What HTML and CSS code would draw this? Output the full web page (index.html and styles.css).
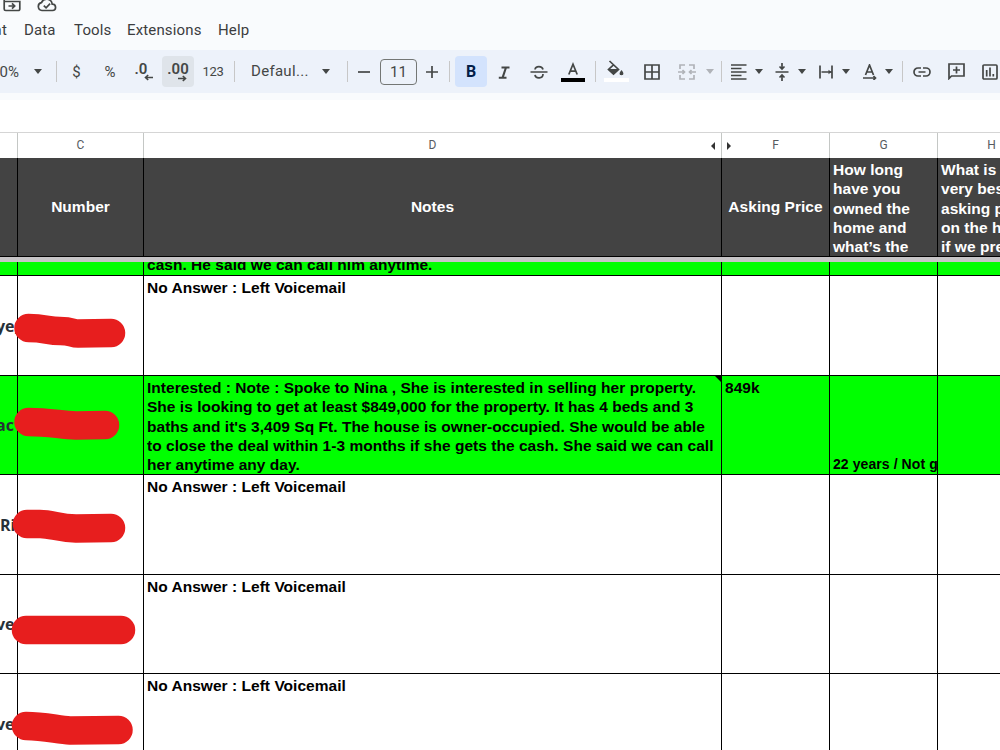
FILE: index.html
```
<!DOCTYPE html>
<html lang="en">

<head>
    <meta charset="UTF-8">
    <meta name="viewport" content="width=device-width, initial-scale=1.0">
    <title>Leads</title>
    <link rel="stylesheet" href="styles.css">
</head>

<body>
    <header class="top">
        <div class="doc-icons">
            <svg width="18" height="16" viewBox="0 0 18 16" class="line"><path d="M1.2 1v11a1.5 1.5 0 0 0 1.5 1.5h12.6a1.5 1.5 0 0 0 1.5-1.5V4.5H1.2M5.5 9h6M9 6.3 11.7 9 9 11.7"/></svg>
            <svg width="20" height="16" viewBox="0 0 20 16" class="line"><path d="M5 13.5a4 4 0 0 1-.5-7.9 5.6 5.6 0 0 1 10.7 1.5 3.2 3.2 0 0 1 .3 6.4zM6.8 8.6l2.3 2.3 4-4.2"/></svg>
        </div>
        <nav class="menu">
            <span class="menu-format">Format</span>
            <span class="menu-data">Data</span>
            <span class="menu-tools">Tools</span>
            <span class="menu-ext">Extensions</span>
            <span>Help</span>
        </nav>
    </header>

    <div class="toolbar">
        <div class="tool zoom">100%</div>
        <div class="tool"><i class="caret"></i></div>
        <div class="tool"><i class="sep"></i></div>
        <div class="tool">$</div>
        <div class="tool">%</div>
        <div class="tool decimal">.0
            <svg class="arrow" width="9" height="7" viewBox="0 0 9 7"><path d="M9 3.5H2M4.2 1 1.5 3.5 4.2 6"/></svg>
        </div>
        <div class="tool"><div class="btn hover decimal">.00
            <svg class="arrow" width="9" height="7" viewBox="0 0 9 7"><path d="M0 3.5h7M4.8 1l2.7 2.5L4.8 6"/></svg>
        </div></div>
        <div class="tool small">123</div>
        <div class="tool"><i class="sep"></i></div>
        <div class="tool font-name">Defaul...</div>
        <div class="tool"><i class="caret"></i></div>
        <div class="tool"><i class="sep"></i></div>
        <div class="tool"><svg width="12" height="12" viewBox="0 0 12 12" class="line"><path d="M0 6h12"/></svg></div>
        <div class="tool"><div class="font-size">11</div></div>
        <div class="tool"><svg width="12" height="12" viewBox="0 0 12 12" class="line"><path d="M0 6h12M6 0v12"/></svg></div>
        <div class="tool"><i class="sep"></i></div>
        <div class="tool"><div class="btn active">B</div></div>
        <div class="tool"><svg width="20" height="20" viewBox="0 0 20 20" class="line thick"><path d="M7.5 5.5H15.5M4.8 15.7h7.7M12 5.5 8.6 15.7"/></svg></div>
        <div class="tool"><svg width="20" height="20" viewBox="0 0 20 20" class="line"><path d="M1.5 10h17M6 7.5C6.5 3.7 13.2 3.7 14 7.5M6 12.8c.6 4.2 8 4.2 8-.8"/></svg></div>
        <div class="tool"><svg width="24" height="22" viewBox="0 0 24 22" class="line"><path d="M7.8 13.5 12 3.3 16.2 13.5M9.2 10.2h5.6"/><path class="bar-black" d="M0 17h24v4H0z"/></svg></div>
        <div class="tool"><i class="sep"></i></div>
        <div class="tool"><svg width="26" height="24" viewBox="0 0 26 24" class="line"><path d="M6.5 1 15.5 9.5 10.5 14 5.5 9.5 10.5 4.8"/><path class="fill" d="M5 9h11l-5.5 5.8zM18.5 10c3 3.6 2 5.2 0 5.2s-3-1.6 0-5.2z"/><path class="bar-white" d="M1 18h25v4H1z"/></svg></div>
        <div class="tool"><svg width="16" height="16" viewBox="0 0 16 16" class="line"><path d="M1 1h14v14H1zM8 1v14M1 8h14"/></svg></div>
        <div class="tool"><svg width="18" height="16" viewBox="0 0 18 16" class="line off"><path d="M7 1H2v4M7 15H2v-4M11 1h5v4M11 15h5v-4M0 8h6M4.5 6 6.500 8l-2 2M18 8h-6M13.500 6 11.500 8l2 2"/></svg></div>
        <div class="tool"><i class="caret off"></i></div>
        <div class="tool"><i class="sep"></i></div>
        <div class="tool"><svg width="16" height="16" viewBox="0 0 16 16" class="line"><path d="M0 1h15.5M0 4.5h10.5M0 8h15.5M0 11.5h10.5M0 15h15.5"/></svg></div>
        <div class="tool"><i class="caret"></i></div>
        <div class="tool"><svg width="14" height="18" viewBox="0 0 14 18" class="line"><path d="M.5 9h13M7 0v5.5M4.5 3.5 7 6l2.5-2.5M7 18v-5.5M4.5 14.5 7 12l2.5 2.5"/></svg></div>
        <div class="tool"><i class="caret"></i></div>
        <div class="tool wrap"><svg width="14" height="14" viewBox="0 0 14 14" class="line"><path d="M1 .5v13M13 .5v13M2.500 7h10"/><path class="fill" d="M9.500 4.800 12.500 7l-3 2.200z"/></svg></div>
        <div class="tool"><i class="caret"></i></div>
        <div class="tool rotate"><svg width="16" height="16" viewBox="0 0 16 16" class="line"><path d="M3.5 11 7.5 1 11.5 11M4.8 8h5.4M1 14h12.5M11.5 12l2 2-2 2"/></svg></div>
        <div class="tool"><i class="caret"></i></div>
        <div class="tool"><i class="sep"></i></div>
        <div class="tool"><svg width="18" height="10" viewBox="0 0 18 10" class="line"><path d="M8 1H5a4 4 0 0 0 0 8h3M10 1h3a4 4 0 0 1 0 8h-3M5.5 5h7"/></svg></div>
        <div class="tool"><svg width="17" height="17" viewBox="0 0 17 17" class="line"><path d="M1 15.5V1h15v12H3.5zM8.5 3.5v7M5 7h7"/></svg></div>
        <div class="tool"><svg width="16" height="16" viewBox="0 0 16 16" class="line"><rect x="1" y="1" width="14" height="14" rx="1"/><path d="M4.7 6v6.5M8 3.5v9M11.3 10v2.5"/></svg></div>
    </div>

    <main class="sheet">
        <div class="row letters">
            <div class="cell"></div>
            <div class="cell">C</div>
            <div class="cell">D<i class="hidden-left"></i></div>
            <div class="cell"><i class="hidden-right"></i>F</div>
            <div class="cell">G</div>
            <div class="cell">H</div>
        </div>
        <div class="row head">
            <div class="cell"></div>
            <div class="cell center">Number</div>
            <div class="cell center">Notes</div>
            <div class="cell center">Asking Price</div>
            <div class="cell">How long<br>have you<br>owned the<br>home and<br>what’s the</div>
            <div class="cell">What is the<br>very best<br>asking price<br>on the home<br>if we pre</div>
        </div>
        <div class="freeze"></div>
        <div class="row green partial">
            <div class="cell"></div>
            <div class="cell"></div>
            <div class="cell bottom">cash. He said we can call him anytime.</div>
            <div class="cell"></div>
            <div class="cell"></div>
            <div class="cell"></div>
        </div>
        <div class="row tall">
            <div class="cell name">ye,</div>
            <div class="cell number"><svg class="scribble" width="144" height="99"><path d="M28.5 52C45 52 48 55 60 55S72 57.5 78 57.5 111 57 111 57"/></svg></div>
            <div class="cell">No Answer : Left Voicemail</div>
            <div class="cell"></div>
            <div class="cell"></div>
            <div class="cell"></div>
        </div>
        <div class="row green">
            <div class="cell name">ac</div>
            <div class="cell number"><svg class="scribble" width="144" height="99"><path d="M28.5 46C50 46 60 49 76 49.5L105 49"/></svg></div>
            <div class="cell noted">Interested : Note : Spoke to Nina , She is interested in selling her property.<br>She is looking to get at least $849,000 for the property. It has 4 beds and 3<br>baths and it's 3,409 Sq Ft. The house is owner-occupied. She would be able<br>to close the deal within 1-3 months if she gets the cash. She said we can call<br>her anytime any day.</div>
            <div class="cell">849k</div>
            <div class="cell bottom years">22 years / Not going</div>
            <div class="cell"></div>
        </div>
        <div class="row tall">
            <div class="cell name ri">Ri</div>
            <div class="cell number"><svg class="scribble" width="144" height="99"><path d="M27 49H40C52 49 58 53 76 53.5L111 53"/></svg></div>
            <div class="cell">No Answer : Left Voicemail</div>
            <div class="cell"></div>
            <div class="cell"></div>
            <div class="cell"></div>
        </div>
        <div class="row">
            <div class="cell name">ve</div>
            <div class="cell number"><svg class="scribble" width="144" height="98"><path d="M26 55H121"/></svg></div>
            <div class="cell">No Answer : Left Voicemail</div>
            <div class="cell"></div>
            <div class="cell"></div>
            <div class="cell"></div>
        </div>
        <div class="row tall">
            <div class="cell name">ve</div>
            <div class="cell number"><svg class="scribble" width="144" height="99"><path d="M26 52C45 52 58 56 70 56.5L118.5 56"/></svg></div>
            <div class="cell">No Answer : Left Voicemail</div>
            <div class="cell"></div>
            <div class="cell"></div>
            <div class="cell"></div>
        </div>
    </main>
</body>

</html>
```
FILE: styles.css
```
* {
    box-sizing: border-box;
}

body {
    margin: 0;
    width: 1000px;
    height: 750px;
    overflow: hidden;
    background-color: #fff;
    font-family: Roboto, Arial, sans-serif;
    color: #444746;
}

.top {
    height: 50px;
    background-color: #f9fbfd;
    overflow: hidden;
}

.doc-icons {
    display: flex;
    gap: 16px;
    height: 16px;
    margin-top: -3px;
    padding-left: 3px;
}

.menu {
    display: flex;
    justify-content: flex-start;
    margin-top: 7px;
    font-size: 15px;
    line-height: 20px;
    letter-spacing: 0.15px;
    color: #3c3d3f;
}

.menu span {
    flex: none;
}

.menu-format {
    display: flex;
    justify-content: flex-end;
    width: 7px;
    margin-right: 17px;
}

.menu-data {
    width: 50px;
}

.menu-tools {
    width: 53px;
}

.menu-ext {
    width: 91px;
}

svg {
    display: block;
    flex: none;
}

.line {
    fill: none;
    stroke: #444746;
    stroke-width: 1.7;
}

.line.thick {
    stroke-width: 2.1;
}

.line.off {
    stroke: #b0b3b8;
}

.line .fill {
    fill: #444746;
    stroke: none;
}

.line .bar-black {
    fill: #000;
    stroke: none;
}

.line .bar-white {
    fill: #fff;
    stroke: none;
}

/* toolbar */
.toolbar {
    display: grid;
    grid-template-columns:
        28px 20px 17px 23px 44px 24px 44px 26px 16px 67px 34px 8px 26px 43px 24px 11px
        32px 34px 35px 34px 10px 31px 42px 27px 20px 3px 32px 8px 38px 2px 37px 11px
        32px 12px 14px 26px 43px 23px;
    height: 43px;
    background-color: #edf2fa;
    font-size: 15px;
    box-shadow: 0 7px 0 #f9fbfd;
}

.tool {
    display: flex;
    justify-content: center;
    align-items: center;
    min-width: 0;
}

.zoom {
    justify-content: flex-end;
    padding-right: 9px;
}

.font-name {
    justify-content: flex-start;
    padding: 0 0 1px 9px;
    letter-spacing: 0.3px;
}

.small {
    font-size: 13px;
    letter-spacing: -0.3px;
}

.wrap {
    padding-left: 9px;
}

.rotate {
    padding-left: 6px;
}

.decimal {
    position: relative;
    font-size: 15px;
    font-weight: 600;
    padding: 0 6px 5px 0;
}

.arrow {
    position: absolute;
    right: 3px;
    bottom: 12px;
    fill: none;
    stroke: #444746;
    stroke-width: 1.6;
}

.btn {
    flex: none;
    display: flex;
    justify-content: center;
    align-items: center;
    width: 32px;
    height: 31px;
    border-radius: 4px;
}

.btn.hover {
    background-color: #dfe4ea;
    padding: 0 0 6px;
}

.btn.hover .arrow {
    right: 7px;
    bottom: 5px;
}

.btn.active {
    background-color: #d3e3fd;
    color: #041e49;
    font-size: 16px;
    font-weight: bold;
}

.font-size {
    flex: none;
    width: 37px;
    height: 26px;
    border: 1px solid #747775;
    border-radius: 4px;
    text-align: center;
    line-height: 25px;
}

.caret {
    flex: none;
    border: 4.5px solid transparent;
    border-top: 5px solid #444746;
    border-bottom: 0;
}

.caret.off {
    border-top-color: #b0b3b8;
}

.sep {
    flex: none;
    width: 1px;
    height: 21px;
    background-color: #c7c7c7;
}

/* sheet */
.sheet {
    margin-top: 39px;
    border-top: 1px solid #d5d5d5;
    font-family: "Liberation Sans", Arial, sans-serif;
    font-size: 15.5px;
    font-weight: bold;
    line-height: 19.3px;
    letter-spacing: 0.03px;
    color: #000;
}

.row {
    display: grid;
    grid-template-columns: 18px 126px 578px 108px 108px 108px;
    height: 99px;
}

.row.tall {
    height: 100px;
}

.cell {
    min-width: 0;
    padding: 2px 0 0 3px;
    border-right: 1px solid #000;
    border-bottom: 1px solid #000;
    white-space: nowrap;
    overflow: hidden;
}

.row.letters {
    height: 25px;
    font-family: Roboto, Arial, sans-serif;
    font-size: 12px;
    font-weight: normal;
    letter-spacing: 0;
    color: #575b5f;
}

.letters .cell {
    position: relative;
    padding: 0;
    border-right-color: #c4c7c5;
    border-bottom: 0;
    text-align: center;
    line-height: 25px;
}

.hidden-left,
.hidden-right {
    position: absolute;
    top: 9px;
    border: 4px solid transparent;
}

.hidden-left {
    right: 6px;
    border-left: 0;
    border-right-color: #333;
}

.hidden-right {
    left: 5px;
    border-right: 0;
    border-left-color: #333;
}

.row.head {
    height: 99px;
    background-color: #434343;
    color: #fff;
}

.cell.center {
    display: flex;
    justify-content: center;
    align-items: center;
    padding: 0 0 1px;
}

.freeze {
    height: 5px;
    background-color: #c6c4c6;
}

.row.green {
    background-color: #00ff00;
}

.row.partial {
    height: 14px;
}

.cell.bottom {
    display: flex;
    align-items: flex-end;
}

.partial .cell.bottom {
    padding-bottom: 1px;
}

.cell.years {
    font-size: 14px;
    letter-spacing: 0.08px;
}

.noted {
    position: relative;
}

/* corner marker of a cell with a note */
.noted::after {
    content: "";
    position: absolute;
    top: 0;
    right: 0;
    border-top: 6px solid #000;
    border-left: 6px solid transparent;
}

.cell.name {
    display: flex;
    align-items: center;
    padding: 2px 0 0;
    text-indent: -4px;
    font-family: "Open Sans", sans-serif;
    font-size: 16px;
    font-weight: 700;
    letter-spacing: 0;
    color: #273038;
}

.cell.ri {
    text-indent: 0;
}

.cell.number {
    position: relative;
    overflow: visible;
}

.scribble {
    position: absolute;
    top: 0;
    left: -18px;
    fill: none;
    stroke: #e71e1e;
    stroke-width: 28.5;
    stroke-linecap: round;
    stroke-linejoin: round;
}
```
